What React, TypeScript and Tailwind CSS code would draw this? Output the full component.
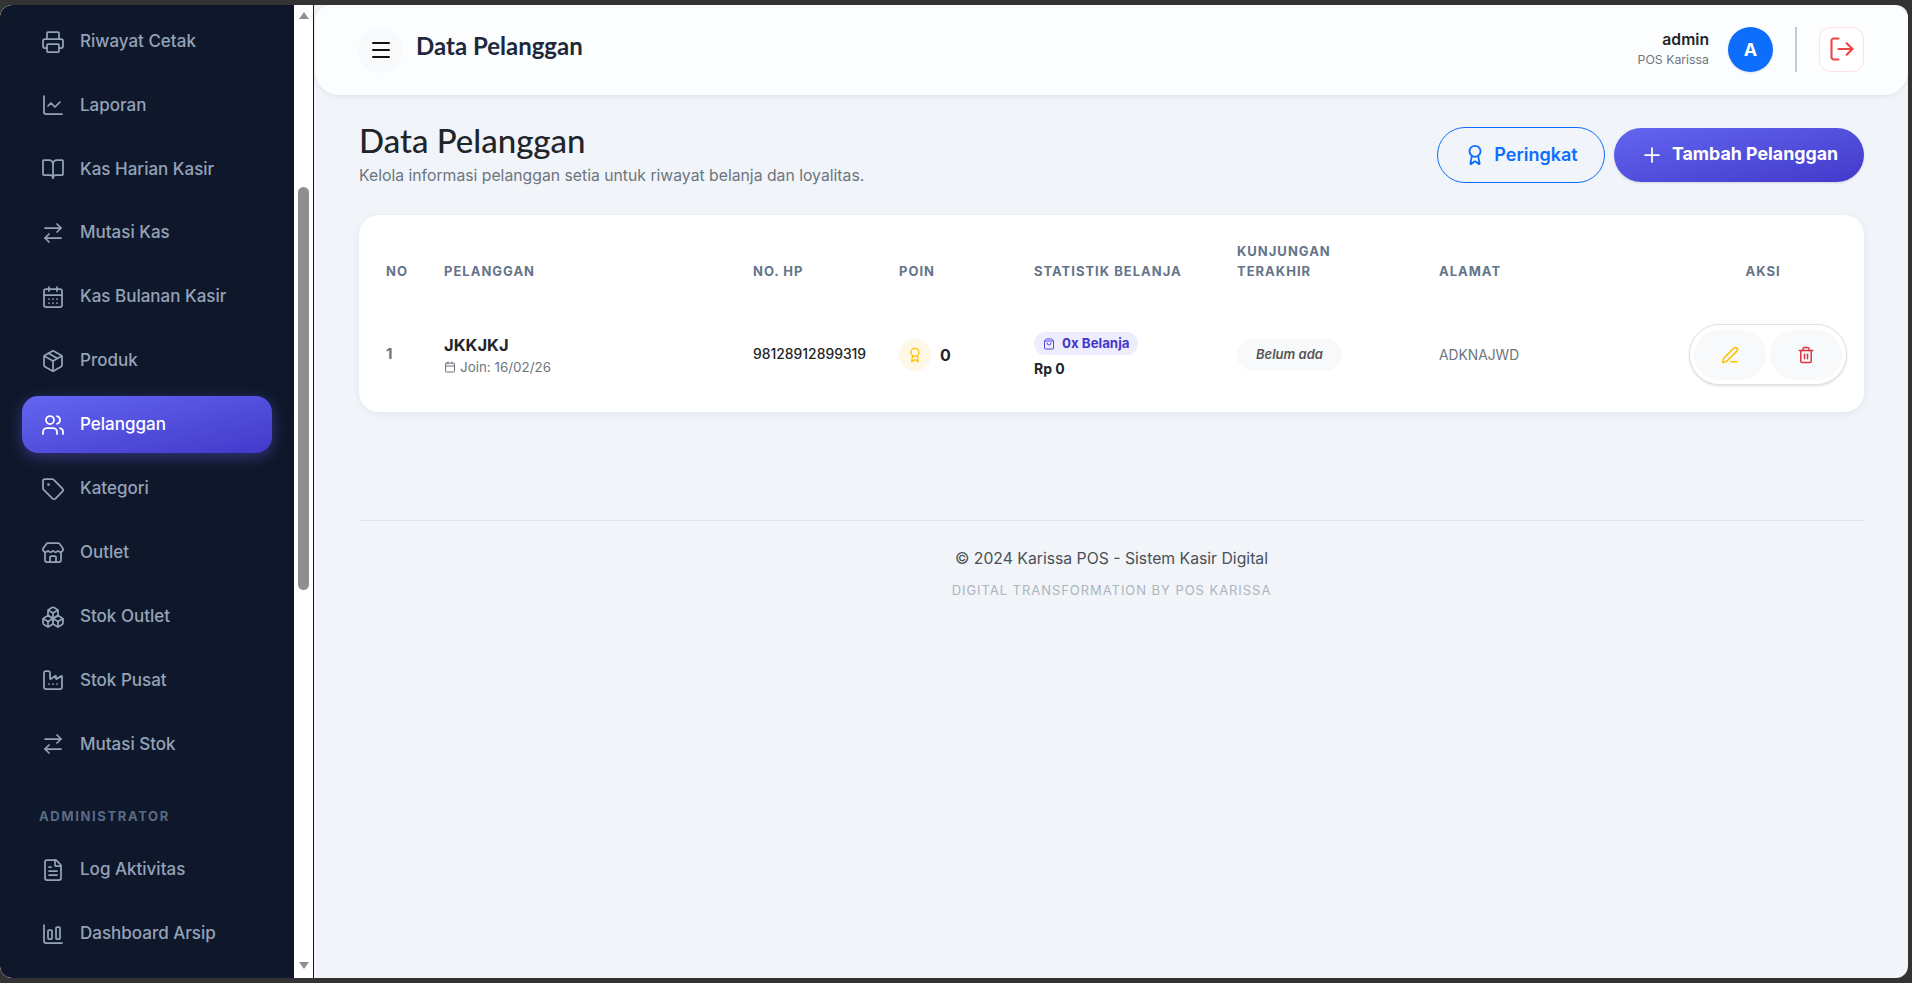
import React from 'react';
import {
  Printer, ChartLine, BookOpen, ArrowRightLeft, CalendarDays, Package, Users, Tag, Store, Boxes, Factory,
  FileText, ChartColumnBig, Menu, LogOut, Award, Plus, Calendar, ShoppingBag, PenLine, Trash2,
} from 'lucide-react';

const menu = [
  { label: 'Riwayat Cetak', icon: Printer },
  { label: 'Laporan', icon: ChartLine },
  { label: 'Kas Harian Kasir', icon: BookOpen },
  { label: 'Mutasi Kas', icon: ArrowRightLeft },
  { label: 'Kas Bulanan Kasir', icon: CalendarDays },
  { label: 'Produk', icon: Package },
  { label: 'Pelanggan', icon: Users, active: true },
  { label: 'Kategori', icon: Tag },
  { label: 'Outlet', icon: Store },
  { label: 'Stok Outlet', icon: Boxes },
  { label: 'Stok Pusat', icon: Factory },
  { label: 'Mutasi Stok', icon: ArrowRightLeft },
];

const adminMenu = [
  { label: 'Log Aktivitas', icon: FileText },
  { label: 'Dashboard Arsip', icon: ChartColumnBig },
];

const thClass = 'px-4 pt-[26px] pb-4 align-bottom text-left text-[13px] leading-5 font-bold tracking-[1px] text-[#64748b]';

function NavItem({ label, icon: Icon, active }: { label: string; icon: React.ElementType; active?: boolean }) {
  return (
    <a
      className={
        active
          ? 'flex h-[57px] items-center gap-[15px] rounded-2xl bg-gradient-to-br from-[#6366f1] to-[#4338ca] px-[19px] text-white shadow-[0_4px_15px_rgba(99,102,241,0.4)]'
          : 'flex h-[57px] items-center gap-[15px] rounded-2xl px-[19px] text-[#94a3b8]'
      }
    >
      <Icon size={24} strokeWidth={1.75} className="shrink-0" />
      <span className="text-[17px] font-medium whitespace-nowrap">{label}</span>
    </a>
  );
}

function Sidebar() {
  return (
    <aside className="flex h-full w-[314px] shrink-0 border-r border-[#0f172a] bg-white">
      <nav className="h-full w-[294px] overflow-hidden rounded-l-xl bg-[#0f172a] px-[22px] pt-[8px]">
        <div className="flex flex-col gap-[6.9px]">
          {menu.map((m) => (
            <NavItem key={m.label} {...m} />
          ))}
        </div>
        <div className="mt-[34px] mb-[16.5px] px-[17px] text-[13px] leading-[18px] font-bold tracking-[1.65px] text-[#5a6b85]">ADMINISTRATOR</div>
        <div className="flex flex-col gap-[6.9px]">
          {adminMenu.map((m) => (
            <NavItem key={m.label} {...m} />
          ))}
        </div>
      </nav>
      <div className="flex h-full w-[19px] flex-col items-center justify-between pt-[7px] pb-[9px]">
        <div className="h-0 w-0 border-x-[5px] border-b-[7px] border-x-transparent border-b-[#8f8f8f]" />
        <div className="mt-[168px] mb-[372px] w-[11px] flex-1 rounded-full bg-[#8f8f8f]" />
        <div className="h-0 w-0 border-x-[5px] border-t-[7px] border-x-transparent border-t-[#8f8f8f]" />
      </div>
    </aside>
  );
}

function Header() {
  return (
    <header className="ml-px flex h-[90px] items-center justify-between rounded-t-[16px] rounded-b-[24px] bg-[#fcfdff] pr-[44px] pl-[43px] shadow-[0_1px_6px_rgba(0,0,0,0.08)]">
      <div className="flex items-center gap-[13px]">
        <button className="flex h-[45px] w-[45px] items-center justify-center rounded-full bg-[#f8f9fa] text-[#111]">
          <Menu size={24} strokeWidth={2} />
        </button>
        <h1 className="pb-[8px] font-['Lato',sans-serif] text-[24px] font-bold text-[#1e293b]">Data Pelanggan</h1>
      </div>
      <div className="flex items-center pb-[2px]">
        <div className="mr-[19px] mb-[1px] text-right">
          <div className="text-[15.7px] leading-[22px] font-semibold text-[#212529]">admin</div>
          <div className="text-[12.3px] leading-[18px] text-[#6c757d]">POS Karissa</div>
        </div>
        <div className="flex h-[45px] w-[45px] items-center justify-center rounded-full bg-[#0d6efd] text-[18px] font-bold text-white shadow-sm">A</div>
        <div className="mx-[22px] h-[45px] w-[2px] bg-[#c6c8cb]" />
        <button className="flex h-[45px] w-[45px] items-center justify-center rounded-[12px] border border-[#fde2e2] bg-white text-[#ef4444]">
          <LogOut size={28} strokeWidth={1.8} />
        </button>
      </div>
    </header>
  );
}

function CustomerTable() {
  return (
    <div className="mt-[30px] h-[197px] rounded-[20px] bg-white px-[11px] shadow-[0_2px_8px_rgba(0,0,0,0.06)]">
      <table className="w-[1483px] table-fixed border-collapse">
        <colgroup>
          <col className="w-[58px]" />
          <col className="w-[309px]" />
          <col className="w-[146px]" />
          <col className="w-[135px]" />
          <col className="w-[203px]" />
          <col className="w-[202px]" />
          <col className="w-[250px]" />
          <col className="w-[180px]" />
        </colgroup>
        <thead>
          <tr>
            <th className={thClass}>NO</th>
            <th className={thClass}>PELANGGAN</th>
            <th className={thClass}>NO. HP</th>
            <th className={thClass}>POIN</th>
            <th className={thClass + ' whitespace-nowrap'}>STATISTIK BELANJA</th>
            <th className={thClass}>KUNJUNGAN<br />TERAKHIR</th>
            <th className={thClass}>ALAMAT</th>
            <th className={thClass + ' !text-center'}>AKSI</th>
          </tr>
        </thead>
        <tbody>
          <tr>
            <td className="h-[115px] px-4 align-middle text-[15px] font-bold text-[#6c757d]">1</td>
            <td className="px-4 align-middle">
              <div className="text-[16.5px] leading-[22px] font-bold text-[#212529]">JKKJKJ</div>
              <div className="mt-[2px] flex items-center gap-[4px] text-[13.4px] leading-[18px] text-[#6c757d]">
                <Calendar size={12} strokeWidth={2} />
                <span>Join: 16/02/26</span>
              </div>
            </td>
            <td className="px-4 align-middle text-[13.9px] font-medium text-[#212529]">98128912899319</td>
            <td className="px-4 align-middle">
              <div className="flex items-center gap-[9px]">
                <span className="flex h-[32px] w-[32px] items-center justify-center rounded-full bg-[#fff8e6] text-[#ffc107]">
                  <Award size={16} strokeWidth={2} />
                </span>
                <span className="text-[16px] font-bold text-[#212529]">0</span>
              </div>
            </td>
            <td className="px-4 align-middle">
              <span className="inline-flex h-[23px] items-center gap-[7px] rounded-full bg-[#eeedfd] px-[9px] text-[13.3px] font-bold text-[#4338ca]">
                <ShoppingBag size={12} strokeWidth={2} className="text-[#4f46e5]" />
                0x Belanja
              </span>
              <div className="mt-[4px] text-[14px] leading-[18px] font-bold text-[#212529]">Rp 0</div>
            </td>
            <td className="px-4 align-middle">
              <span className="inline-flex h-[32px] items-center rounded-full bg-[#f8f9fa] px-[19px] text-[13px] font-semibold text-[#555] italic">Belum ada</span>
            </td>
            <td className="px-4 pt-[1px] align-middle text-[13.8px] text-[#6c757d]">ADKNAJWD</td>
            <td className="px-4 align-middle">
              <div className="flex h-[61px] w-[158px] items-center gap-[4px] rounded-full border border-[#dee2e6] bg-white px-[4px] shadow-sm">
                <button className="flex h-[50px] w-[72px] items-center justify-center rounded-full bg-[#f8f9fa] text-[#ffc107]">
                  <PenLine size={18} strokeWidth={2} />
                </button>
                <button className="flex h-[50px] w-[72px] items-center justify-center rounded-full bg-[#f8f9fa] text-[#dc3545]">
                  <Trash2 size={18} strokeWidth={2} />
                </button>
              </div>
            </td>
          </tr>
        </tbody>
      </table>
    </div>
  );
}

export default function App() {
  return (
    <div className="h-[983px] w-[1912px] overflow-hidden bg-[#333333] pt-[5px] pr-[4px] pb-[5px] font-['Inter',sans-serif]">
      <div className="flex h-full overflow-hidden rounded-xl">
        <Sidebar />
        <main className="flex-1 bg-[#f1f4f9]">
          <Header />
          <div className="pr-[44px] pl-[45px]">
            <div className="mt-[28px] flex h-[62px] items-center justify-between">
              <div>
                <h2 className="font-['Lato',sans-serif] text-[33px] leading-[38px] font-medium text-[#212529]">Data Pelanggan</h2>
                <p className="mt-[6px] text-[15.75px] leading-[22px] text-[#6c757d]">Kelola informasi pelanggan setia untuk riwayat belanja dan loyalitas.</p>
              </div>
              <div className="mt-[1px] flex items-center gap-[9px]">
                <button className="flex h-[56px] w-[168px] items-center justify-center gap-[8px] rounded-full border border-[#0d6efd] text-[18px] font-semibold text-[#0d6efd]">
                  <Award size={22} strokeWidth={2} />
                  Peringkat
                </button>
                <button className="flex h-[54px] w-[250px] items-center justify-center gap-[8px] rounded-full bg-gradient-to-br from-[#6366f1] to-[#4338ca] text-[17.8px] font-bold text-white shadow-sm">
                  <Plus size={24} strokeWidth={1.75} />
                  Tambah Pelanggan
                </button>
              </div>
            </div>
            <CustomerTable />
            <footer className="mt-[108px] border-t border-[#e2e5ec] pt-[26px] text-center">
              <p className="text-[15.75px] leading-[24px] text-[#495057]">© 2024 Karissa POS - Sistem Kasir Digital</p>
              <p className="mt-[10px] text-[13px] leading-[18px] tracking-[0.95px] text-[#adb5bd]">DIGITAL TRANSFORMATION BY POS KARISSA</p>
            </footer>
          </div>
        </main>
      </div>
    </div>
  );
}
